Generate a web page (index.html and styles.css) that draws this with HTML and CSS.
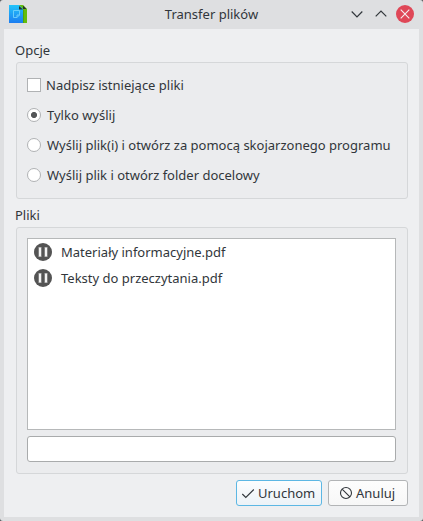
FILE: index.html
```
<!DOCTYPE html>
<html lang="pl">
<head>
<meta charset="utf-8">
<title>Transfer plików</title>
<link rel="stylesheet" href="styles.css">
</head>
<body>
<div class="window">
  <header class="titlebar">
    <svg class="app-icon" width="18" height="18" viewBox="0 0 18 18">
      <defs><linearGradient id="blue" x1="0" y1="0" x2="0" y2="1"><stop offset="0" stop-color="#22c4fa"/><stop offset="1" stop-color="#1b7df0"/></linearGradient></defs>
      <path fill="#63bd0c" d="M10 0h4l4 4v14h-4z"/>
      <path fill="#4fa806" d="M14 5h1v13h-1z"/>
      <path fill="url(#blue)" d="M0 0h10l4 4v14H0z"/>
      <path fill="#26352b" d="M10 1l4 3.500h-4zM14 .5l3.500 3.500H14z"/>
      <path fill="none" stroke="#6fd0fb" stroke-width=".9" d="M4.500 5.500h6v4.500l-2.500 2.500H4.500zM8 12.500V10h2.500"/>
    </svg>
    <h1 class="title">Transfer plików</h1>
    <div class="controls">
      <svg width="12" height="18" viewBox="0 0 12 18"><path class="chevron" d="M.7 6.500 6 11.800l5.300-5.300"/></svg>
      <svg width="12" height="18" viewBox="0 0 12 18"><path class="chevron" d="M.7 11.300 6 6l5.300 5.300"/></svg>
      <svg class="close" width="18" height="18" viewBox="0 0 18 18"><circle cx="9" cy="9" r="9" fill="#df4757"/><path class="cross" d="m4.700 4.700 8.600 8.600m0-8.600-8.600 8.600"/></svg>
    </div>
  </header>
  <main class="content">
    <h2 class="group-title">Opcje</h2>
    <section class="group options">
      <label class="option"><span class="checkbox"></span><span class="label">Nadpisz istniejące pliki</span></label>
      <label class="option"><span class="radio checked"></span><span class="label">Tylko wyślij</span></label>
      <label class="option"><span class="radio"></span><span class="label">Wyślij plik(i) i otwórz za pomocą skojarzonego programu</span></label>
      <label class="option"><span class="radio"></span><span class="label">Wyślij plik i otwórz folder docelowy</span></label>
    </section>
    <h2 class="group-title second">Pliki</h2>
    <section class="group files">
      <ul class="list">
        <li class="file"><svg width="18" height="18" viewBox="0 0 18 18"><circle cx="9" cy="9" r="9" fill="#545454"/><path fill="#808080" d="M4 4h4v10H4zM10 4h4v10h-4z"/><path fill="#f4f4f4" d="M5 4.500h2v9H5zM11 4.500h2v9h-2z"/></svg><span>Materiały informacyjne.pdf</span></li>
        <li class="file"><svg width="18" height="18" viewBox="0 0 18 18"><circle cx="9" cy="9" r="9" fill="#545454"/><path fill="#808080" d="M4 4h4v10H4zM10 4h4v10h-4z"/><path fill="#f4f4f4" d="M5 4.500h2v9H5zM11 4.500h2v9h-2z"/></svg><span>Teksty do przeczytania.pdf</span></li>
      </ul>
      <div class="field"></div>
    </section>
    <footer class="actions">
      <button class="button primary"><svg width="14" height="14" viewBox="0 0 14 14"><path class="glyph" d="m1.300 8 3.500 3.500 8-8"/></svg><span>Uruchom</span></button>
      <button class="button cancel"><svg width="14" height="14" viewBox="0 0 14 14"><path class="glyph" d="M1.500 7a5.500 5.500 0 1 0 11 0 5.500 5.500 0 1 0-11 0M3.100 3.100l7.800 7.800"/></svg><span>Anuluj</span></button>
    </footer>
  </main>
</div>
</body>
</html>
```
FILE: styles.css
```
* { box-sizing: border-box; }
body {
  margin: 0;
  background: #55585b;
  font: 13px/18px "Noto Sans", sans-serif;
  color: #31363b;
}
.window {
  width: 423px;
  height: 521px;
  padding: 0 4px 4px;
  background: #dedfe1;
  border-radius: 3px;
  display: flex;
  flex-direction: column;
}
.titlebar {
  height: 29px;
  flex: none;
  display: grid;
  grid-template-columns: 72px 1fr 72px;
  align-items: center;
  padding: 0 5px 1px;
}
.app-icon, .controls svg, .file svg, .button svg { display: block; flex: none; }
.title, .group-title { margin: 0; font-size: inherit; font-weight: 400; }
.title { text-align: center; white-space: nowrap; }
.controls { display: flex; gap: 12px; justify-content: flex-end; }
.controls .close { margin-left: -3px; }
.chevron { fill: none; stroke: #31363b; stroke-width: 1.2; }
.cross { fill: none; stroke: #f5f0f1; stroke-width: 1.1; }
.content {
  flex: 1;
  background: #eeeff1;
  padding: 12px 11px 11px 12px;
}
.group-title { height: 21px; line-height: 18px; margin-left: -1px; }
.group-title.second { margin-top: 7px; }
.group {
  background: #ebecee;
  border: 1px solid #d5d7d9;
  border-radius: 3px;
}
.options {
  height: 137px;
  padding: 7px 10px;
}
.option { display: flex; align-items: center; height: 30px; white-space: nowrap; }
.checkbox, .radio {
  width: 14px;
  height: 14px;
  flex: none;
  background: #fff;
  border: 1px solid #b0b2b4;
}
.checkbox { margin-right: 5px; }
.radio { margin-right: 6px; border-radius: 50%; }
.checked {
  background: radial-gradient(circle, #545658 2.700px, #fff 3.400px);
}
.files { height: 247px; padding: 10px 11px 10px 10px; }
.list {
  margin: 0;
  padding: 0 6px;
  height: 192px;
  list-style: none;
  background: #fff;
  border: 1px solid #b6b8b9;
}
.file { height: 26px; display: flex; align-items: center; gap: 9px; }
.field {
  height: 26px;
  margin-top: 6px;
  background: #fff;
  border: 1px solid #a9abac;
  border-radius: 3px;
}
.actions { display: flex; justify-content: flex-end; gap: 6px; margin-top: 6px; }
.button {
  height: 26px;
  padding: 0 0 0 4px;
  display: flex;
  align-items: center;
  gap: 3px;
  font: inherit;
  color: inherit;
  background: linear-gradient(#fdfdfd, #f7f7f7);
  border: 1px solid #b2b4b6;
  border-radius: 3px;
}
.primary {
  width: 86px;
  background: linear-gradient(#fcfdfe, #ecf2f7);
  border-color: #5cb7e4;
}
.cancel { width: 80px; padding-left: 10px; }
.glyph { fill: none; stroke: #31363b; stroke-width: 1.1; }
```
